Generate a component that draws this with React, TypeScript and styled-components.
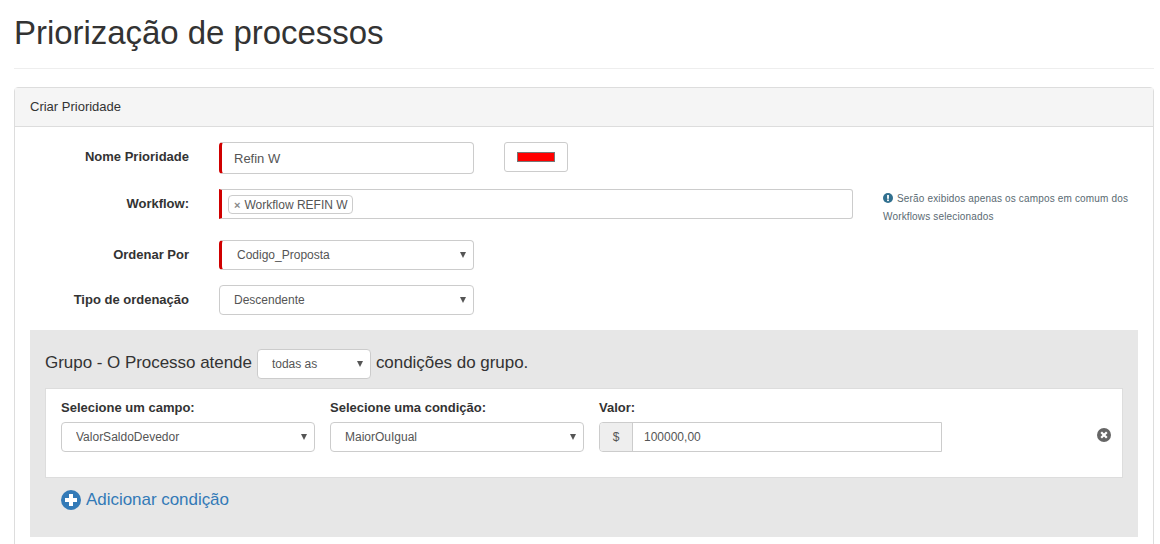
import React from "react";
import styled, { createGlobalStyle } from "styled-components";

const GlobalStyle = createGlobalStyle`
  html, body {
    margin: 0;
    padding: 0;
    background: #fff;
    overflow: hidden;
  }
  body {
    font-family: "Liberation Sans", Arial, sans-serif;
    font-size: 12px;
    color: #333;
  }
  * {
    box-sizing: border-box;
  }
`;

const selectArrow =
  "url(\"data:image/svg+xml,%3Csvg xmlns='http://www.w3.org/2000/svg' width='6' height='6'%3E%3Cpath d='M0 0h6L3 6z' fill='%23555'/%3E%3C/svg%3E\")";

const Page = styled.div`
  height: 544px;
  padding: 0 6px 0 14px;
  overflow: hidden;
`;

const PageHeader = styled.div`
  height: 69px;
  border-bottom: 1px solid #eee;
  margin-bottom: 18px;
  padding-top: 13px;
`;

const Title = styled.h1`
  margin: 0;
  font-size: 33px;
  font-weight: 400;
  letter-spacing: -0.04px;
  line-height: 40px;
  color: #333;
`;

const Panel = styled.div`
  border: 1px solid #ddd;
  border-radius: 4px 4px 0 0;
  height: 600px;
`;

const PanelHeading = styled.div`
  height: 39px;
  padding: 0 15px 2px;
  display: flex;
  align-items: center;
  background: #f5f5f5;
  border-bottom: 1px solid #ddd;
  font-size: 13px;
  color: #333;
`;

const PanelBody = styled.div`
  padding: 15px 15px 0;
`;

const Row = styled.div<{ $height: number; $gap: number }>`
  display: flex;
  align-items: flex-start;
  height: ${(p) => p.$height}px;
  margin-bottom: ${(p) => p.$gap}px;
`;

const Label = styled.label`
  flex: 0 0 159px;
  margin-right: 30px;
  text-align: right;
  font-size: 13px;
  font-weight: 700;
  line-height: 30px;
  color: #333;
  white-space: nowrap;
`;

const TextInput = styled.input<{ $required?: boolean }>`
  width: 255px;
  height: 32px;
  padding: 0 12px;
  border: 1px solid #ccc;
  border-left: ${(p) => (p.$required ? "3px solid #d00000" : "1px solid #ccc")};
  border-radius: 4px;
  background: #fff;
  font: 13px "Liberation Sans", Arial, sans-serif;
  color: #555;
  outline: none;
`;

const ColorButton = styled.div`
  width: 64px;
  height: 30px;
  margin-left: 30px;
  display: flex;
  align-items: center;
  justify-content: center;
  border: 1px solid #ccc;
  border-radius: 3px;
  background: #fff;
`;

const Swatch = styled.span`
  width: 38px;
  height: 10px;
  background: #ff0000;
  border: 1px solid #777;
`;

const MultiSelect = styled.div`
  flex: none;
  width: 634px;
  height: 30px;
  padding: 5px 5px 0 6px;
  border: 1px solid #ccc;
  border-left: 3px solid #d00000;
  border-radius: 0 3px 3px 0;
  background: #fff;
`;

const Tag = styled.span`
  display: inline-flex;
  align-items: center;
  height: 19px;
  padding: 0 4px 0 5px;
  border: 1px solid #ccc;
  border-radius: 4px;
  color: #555;
  white-space: nowrap;
`;

const TagClose = styled.span`
  margin-right: 4px;
  font-size: 11px;
  font-weight: 700;
  color: #888;
`;

const Hint = styled.div`
  flex: none;
  width: 255px;
  margin: 1px 0 0 30px;
  font-size: 10px;
  letter-spacing: 0.16px;
  line-height: 18px;
  color: #5a6a72;
`;

const HintIcon = styled.svg`
  width: 10px;
  height: 10px;
  margin-right: 4px;
  vertical-align: -1px;
`;

const Select = styled.select<{ $required?: boolean; $width: number }>`
  appearance: none;
  flex: none;
  width: ${(p) => p.$width}px;
  height: 30px;
  padding: 0 20px 0 ${(p) => (p.$required ? 15 : 14)}px;
  border: 1px solid #ccc;
  border-left: ${(p) => (p.$required ? "3px solid #d00000" : "1px solid #ccc")};
  border-radius: 4px;
  background: #fff ${selectArrow} no-repeat right 7px center;
  font: 12px "Liberation Sans", Arial, sans-serif;
  color: #555;
  outline: none;
`;

const Group = styled.div`
  height: 207px;
  padding: 19px 15px 0;
  background: #e7e7e7;
`;

const GroupHeader = styled.div`
  display: flex;
  align-items: center;
  gap: 5px;
  height: 30px;
  padding-bottom: 2px;
  margin-bottom: 9px;
  font-size: 17px;
  letter-spacing: -0.04px;
  color: #333;

  select {
    margin-bottom: -2px;
  }
`;

const Card = styled.div`
  display: flex;
  height: 90px;
  padding: 10px 11px 0 15px;
  gap: 15px;
  background: #fff;
  border: 1px solid #ddd;
`;

const Field = styled.div`
  display: flex;
  flex-direction: column;
`;

const FieldLabel = styled.label`
  height: 23px;
  font-size: 13px;
  font-weight: 700;
  line-height: 18px;
  color: #333;
`;

const InputGroup = styled.div`
  display: flex;
  width: 343px;
  height: 30px;
  border: 1px solid #ccc;
  border-radius: 4px 0 0 4px;
`;

const Addon = styled.span`
  flex: 0 0 33px;
  display: flex;
  align-items: center;
  justify-content: center;
  background: #eee;
  border-right: 1px solid #ccc;
  border-radius: 3px 0 0 3px;
  color: #555;
`;

const AddonInput = styled.input`
  flex: 1;
  min-width: 0;
  padding: 0 11px;
  border: 0;
  background: #fff;
  font: 12px "Liberation Sans", Arial, sans-serif;
  color: #555;
  outline: none;
`;

const RemoveIcon = styled.svg`
  flex: none;
  width: 14px;
  height: 14px;
  margin: 29px 0 0 auto;
`;

const AddLink = styled.a`
  display: flex;
  align-items: center;
  gap: 5px;
  margin: 11px 0 0 16px;
  height: 22px;
  font-size: 17px;
  letter-spacing: -0.04px;
  color: #337ab7;
  text-decoration: none;
`;

const AddIcon = styled.svg`
  width: 20px;
  height: 20px;
`;

function App() {
  return (
    <Page>
      <GlobalStyle />
      <PageHeader>
        <Title>Priorização de processos</Title>
      </PageHeader>
      <Panel>
        <PanelHeading>Criar Prioridade</PanelHeading>
        <PanelBody>
          <Row $height={32} $gap={15}>
            <Label>Nome Prioridade</Label>
            <TextInput $required defaultValue="Refin W" />
            <ColorButton>
              <Swatch />
            </ColorButton>
          </Row>
          <Row $height={30} $gap={21}>
            <Label>Workflow:</Label>
            <MultiSelect>
              <Tag>
                <TagClose>×</TagClose>Workflow REFIN W
              </Tag>
            </MultiSelect>
            <Hint>
              <HintIcon viewBox="0 0 20 20">
                <circle cx="10" cy="10" r="10" fill="#31708f" />
                <rect x="8.2" y="4" width="3.6" height="7.6" fill="#fff" />
                <rect x="8.2" y="13" width="3.6" height="3.2" fill="#fff" />
              </HintIcon>
              Serão exibidos apenas os campos em comum dos Workflows selecionados
            </Hint>
          </Row>
          <Row $height={30} $gap={15}>
            <Label>Ordenar Por</Label>
            <Select $required $width={255} defaultValue="Codigo_Proposta">
              <option>Codigo_Proposta</option>
            </Select>
          </Row>
          <Row $height={30} $gap={15}>
            <Label>Tipo de ordenação</Label>
            <Select $width={255} defaultValue="Descendente">
              <option>Descendente</option>
            </Select>
          </Row>
          <Group>
            <GroupHeader>
              Grupo - O Processo atende
              <Select $width={114} defaultValue="todas as">
                <option>todas as</option>
              </Select>
              condições do grupo.
            </GroupHeader>
            <Card>
              <Field>
                <FieldLabel>Selecione um campo:</FieldLabel>
                <Select $width={254} defaultValue="ValorSaldoDevedor">
                  <option>ValorSaldoDevedor</option>
                </Select>
              </Field>
              <Field>
                <FieldLabel>Selecione uma condição:</FieldLabel>
                <Select $width={254} defaultValue="MaiorOuIgual">
                  <option>MaiorOuIgual</option>
                </Select>
              </Field>
              <Field>
                <FieldLabel>Valor:</FieldLabel>
                <InputGroup>
                  <Addon>$</Addon>
                  <AddonInput defaultValue="100000,00" />
                </InputGroup>
              </Field>
              <RemoveIcon viewBox="0 0 20 20">
                <circle cx="10" cy="10" r="10" fill="#666" />
                <path d="M6 6l8 8M14 6l-8 8" stroke="#fff" strokeWidth="3.2" />
              </RemoveIcon>
            </Card>
            <AddLink href="#">
              <AddIcon viewBox="0 0 20 20">
                <circle cx="10" cy="10" r="10" fill="#337ab7" />
                <path d="M10 4v12M4 10h12" stroke="#fff" strokeWidth="4" />
              </AddIcon>
              Adicionar condição
            </AddLink>
          </Group>
        </PanelBody>
      </Panel>
    </Page>
  );
}

export default App;
